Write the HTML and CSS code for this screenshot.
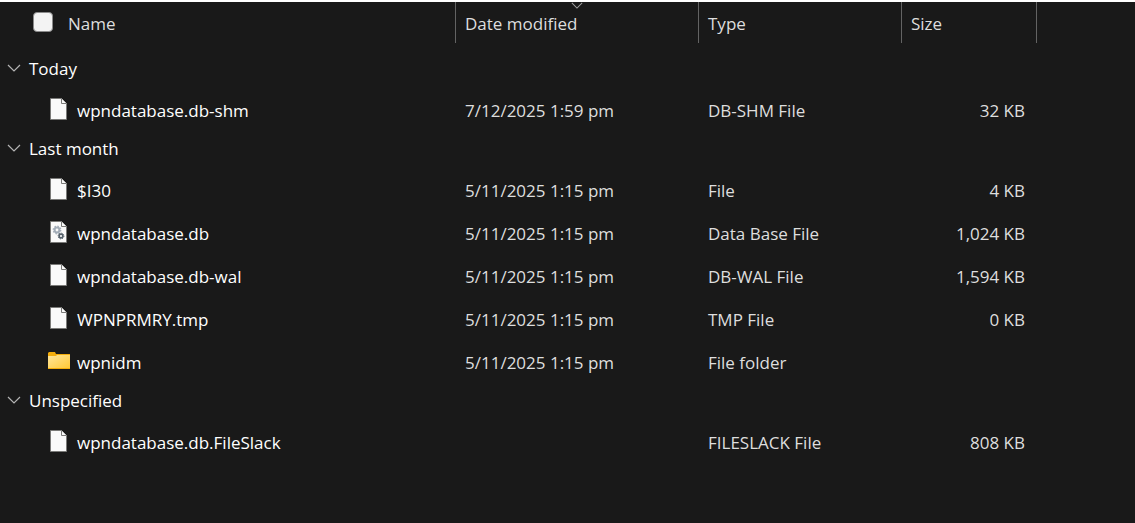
FILE: index.html
```html
<!DOCTYPE html>
<html lang="en">
<head>
  <meta charset="UTF-8">
  <title>Notifications</title>
  <link rel="stylesheet" href="styles.css">
</head>
<body>

<!-- shared icons -->
<svg class="icon-defs" aria-hidden="true">
  <symbol id="icon-chevron" viewBox="0 0 14 8">
    <path d="M1 1 L7 7 L13 1" fill="none" stroke="currentColor" stroke-width="1.2"/>
  </symbol>
  <symbol id="icon-file" viewBox="0 0 17 22">
    <path d="M.5 .5 H11.5 L16.5 5.5 V21.5 H.5 Z" fill="#fafafa" stroke="#7a7a78"/>
    <path d="M11.5 .5 V5.5 H16.5" fill="#fafafa" stroke="#7a7a78"/>
  </symbol>
  <symbol id="icon-database" viewBox="0 0 17 22">
    <use href="#icon-file"/>
    <circle cx="7" cy="9" r="2.4" fill="none" stroke="#a3adb8" stroke-width="2"/>
    <circle cx="7" cy="9" r="3.7" fill="none" stroke="#a3adb8" stroke-width="1.4" stroke-dasharray="1.45 1.45"/>
    <circle cx="11" cy="15" r="1.9" fill="none" stroke="#56626c" stroke-width="1.6"/>
    <circle cx="11" cy="15" r="2.9" fill="none" stroke="#56626c" stroke-width="1" stroke-dasharray="1.14 1.14"/>
  </symbol>
  <symbol id="icon-folder" viewBox="0 0 22 17">
    <path d="M0 1 L1 0 H7 L8 2 H22 V17 H0 Z" fill="#f4ad0c"/>
    <path d="M0 4 H8 L9 3 H22 V16 H0 Z" fill="url(#folder-fill)"/>
  </symbol>
  <linearGradient id="folder-fill" x1="0" y1="0" x2="1" y2="1">
    <stop offset="0" stop-color="#ffe69c"/>
    <stop offset="1" stop-color="#ffc937"/>
  </linearGradient>
</svg>

<main>
  <table class="file-list">
    <colgroup>
      <col class="col-name">
      <col class="col-date">
      <col class="col-type">
      <col class="col-size">
      <col>
    </colgroup>
    <thead>
      <tr>
        <th scope="col">
          <div class="name-header">
            <input type="checkbox" id="selectAll" class="select-all" aria-label="Select all">
            <span>Name</span>
          </div>
        </th>
        <th scope="col" aria-sort="descending">
          Date modified
          <svg class="sort-arrow" aria-hidden="true"><use href="#icon-chevron"/></svg>
        </th>
        <th scope="col">Type</th>
        <th scope="col">Size</th>
        <td></td>
      </tr>
    </thead>

    <tbody>
      <tr class="group">
        <th colspan="5" scope="rowgroup">
          <button type="button" class="group-toggle" aria-expanded="true"><svg class="chevron"><use href="#icon-chevron"/></svg>Today</button>
        </th>
      </tr>
      <tr class="file">
        <td><div class="file-name"><svg class="icon"><use href="#icon-file"/></svg>wpndatabase.db-shm</div></td>
        <td>7/12/2025 1:59 pm</td>
        <td>DB-SHM File</td>
        <td class="size">32 KB</td>
        <td></td>
      </tr>
    </tbody>

    <tbody>
      <tr class="group">
        <th colspan="5" scope="rowgroup">
          <button type="button" class="group-toggle" aria-expanded="true"><svg class="chevron"><use href="#icon-chevron"/></svg>Last month</button>
        </th>
      </tr>
      <tr class="file">
        <td><div class="file-name"><svg class="icon"><use href="#icon-file"/></svg>$I30</div></td>
        <td>5/11/2025 1:15 pm</td>
        <td>File</td>
        <td class="size">4 KB</td>
        <td></td>
      </tr>
      <tr class="file">
        <td><div class="file-name"><svg class="icon"><use href="#icon-database"/></svg>wpndatabase.db</div></td>
        <td>5/11/2025 1:15 pm</td>
        <td>Data Base File</td>
        <td class="size">1,024 KB</td>
        <td></td>
      </tr>
      <tr class="file">
        <td><div class="file-name"><svg class="icon"><use href="#icon-file"/></svg>wpndatabase.db-wal</div></td>
        <td>5/11/2025 1:15 pm</td>
        <td>DB-WAL File</td>
        <td class="size">1,594 KB</td>
        <td></td>
      </tr>
      <tr class="file">
        <td><div class="file-name"><svg class="icon"><use href="#icon-file"/></svg>WPNPRMRY.tmp</div></td>
        <td>5/11/2025 1:15 pm</td>
        <td>TMP File</td>
        <td class="size">0 KB</td>
        <td></td>
      </tr>
      <tr class="file">
        <td><div class="file-name"><svg class="icon icon-folder"><use href="#icon-folder"/></svg>wpnidm</div></td>
        <td>5/11/2025 1:15 pm</td>
        <td>File folder</td>
        <td class="size"></td>
        <td></td>
      </tr>
    </tbody>

    <tbody>
      <tr class="group">
        <th colspan="5" scope="rowgroup">
          <button type="button" class="group-toggle" aria-expanded="true"><svg class="chevron"><use href="#icon-chevron"/></svg>Unspecified</button>
        </th>
      </tr>
      <tr class="file">
        <td><div class="file-name"><svg class="icon"><use href="#icon-file"/></svg>wpndatabase.db.FileSlack</div></td>
        <td></td>
        <td>FILESLACK File</td>
        <td class="size">808 KB</td>
        <td></td>
      </tr>
    </tbody>
  </table>
</main>

</body>
</html>
```
FILE: styles.css
```css
body {
  margin: 0;
  background-color: #191919;
  color: #dedede;
  font-family: 'Segoe UI', 'Open Sans', 'Noto Sans', sans-serif;
  font-size: 17px;
  line-height: 24px;
}

main {
  border-top: 2px solid #ffffff;
}

.icon-defs {
  position: absolute;
  width: 0;
  height: 0;
}

.file-list {
  width: 100%;
  table-layout: fixed;
  border-collapse: separate;
  border-spacing: 0;
}

.col-name {
  width: 456px;
}

.col-date {
  width: 243px;
}

.col-type {
  width: 203px;
}

.col-size {
  width: 135px;
}

th,
td {
  box-sizing: border-box;
  padding: 2px 9px 0;
  font-weight: normal;
  text-align: left;
  white-space: nowrap;
}

/* column headers */
thead th {
  position: relative;
  height: 41px;
  border-right: 1px solid #636363;
}

thead::after {
  content: "";
  display: table-row;
  height: 8px;
}

.name-header {
  display: flex;
  align-items: center;
  gap: 15px;
  padding-left: 24px;
}

.select-all {
  appearance: none;
  width: 20px;
  height: 20px;
  margin: 0 0 4px;
  background-color: #f3f3f3;
  border: 1px solid #8a8a8a;
  border-radius: 4px;
}

.sort-arrow {
  position: absolute;
  top: 0;
  left: 50%;
  width: 12px;
  height: 7px;
  margin-left: -6px;
  color: #a0a0a0;
}

/* groups */
.group th {
  height: 37px;
  padding: 0 7px 1px;
}

.group-toggle {
  display: flex;
  align-items: center;
  gap: 8px;
  padding: 0;
  border: none;
  background: none;
  color: #ffffff;
  font: inherit;
}

.chevron {
  width: 14px;
  height: 8px;
  margin-bottom: 2px;
  color: #b4b4b4;
}

/* rows */
.file td {
  height: 43px;
}

.file-name {
  display: flex;
  align-items: center;
  gap: 10px;
  padding-left: 41px;
  color: #ffffff;
}

.icon {
  width: 17px;
  height: 22px;
  margin-bottom: 4px;
}

.icon-folder {
  width: 22px;
  height: 17px;
  margin: 0 -3px 4px -2px;
}

.file .size {
  padding-right: 12px;
  text-align: right;
}
```
